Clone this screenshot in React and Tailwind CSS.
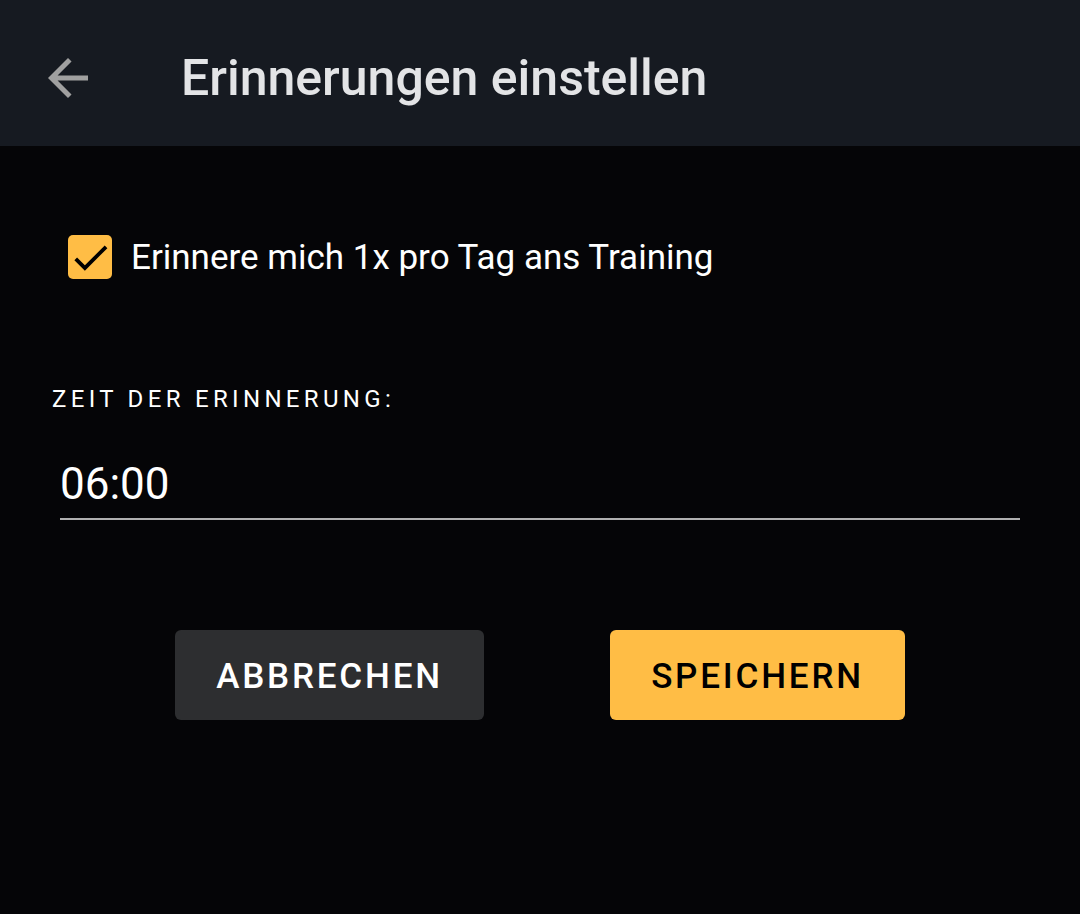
import { useState } from 'react';

export default function App() {
  const [checked, setChecked] = useState(true);
  const [time, setTime] = useState('06:00');

  return (
    <div className="min-h-screen w-full bg-[#050507] text-white" style={{ fontFamily: 'Roboto, "Noto Sans", sans-serif' }}>
      <header className="h-[146px] bg-[#161a21] flex items-center pt-[10px]">
        <button className="ml-[38px] w-[60px] h-[60px] flex items-center justify-center text-[#a0a0a0]">
          <svg width="60" height="60" viewBox="0 0 24 24" fill="currentColor">
            <path d="M20 11H7.83l5.59-5.59L12 4l-8 8 8 8 1.41-1.41L7.83 13H20v-2z" />
          </svg>
        </button>
        <h1 className="ml-[83px] text-[50px] font-medium text-[#e3e4e6] leading-none">Erinnerungen einstellen</h1>
      </header>

      <main className="px-[60px]">
        <label className="flex items-center mt-[89px] ml-[8px] cursor-pointer">
          <input type="checkbox" className="hidden" checked={checked} onChange={e => setChecked(e.target.checked)} />
          <span className={`w-[44px] h-[44px] rounded-[5px] flex items-center justify-center ${checked ? 'bg-[#ffbd45]' : 'border-2 border-[#9e9e9e]'}`}>
            {checked && (
              <svg width="45" height="45" viewBox="0 0 24 24" fill="#000" className="shrink-0">
                <path d="M9 16.17L4.83 12l-1.42 1.41L9 19 21 7l-1.41-1.41z" />
              </svg>
            )}
          </span>
          <span className="ml-[19px] text-[35px] leading-none">Erinnere mich 1x pro Tag ans Training</span>
        </label>

        <div className="mt-[108px] -ml-[8px] text-[24px] tracking-[0.18em] leading-none">ZEIT DER ERINNERUNG:</div>

        <div className="mt-[47px] border-b-2 border-[#b0b0b0] pb-[8px]">
          <input
            value={time}
            onChange={e => setTime(e.target.value)}
            className="bg-transparent outline-none text-[44px] leading-none text-white w-full"
          />
        </div>

        <div className="flex justify-center gap-[126px] mt-[110px]">
          <button className="w-[309px] h-[90px] pt-[5px] rounded-[6px] bg-[#2d2e30] text-white text-[35px] font-medium tracking-[0.08em]">ABBRECHEN</button>
          <button className="w-[295px] h-[90px] pt-[5px] rounded-[6px] bg-[#ffbd45] text-black text-[35px] font-medium tracking-[0.08em]">SPEICHERN</button>
        </div>
      </main>
    </div>
  );
}
